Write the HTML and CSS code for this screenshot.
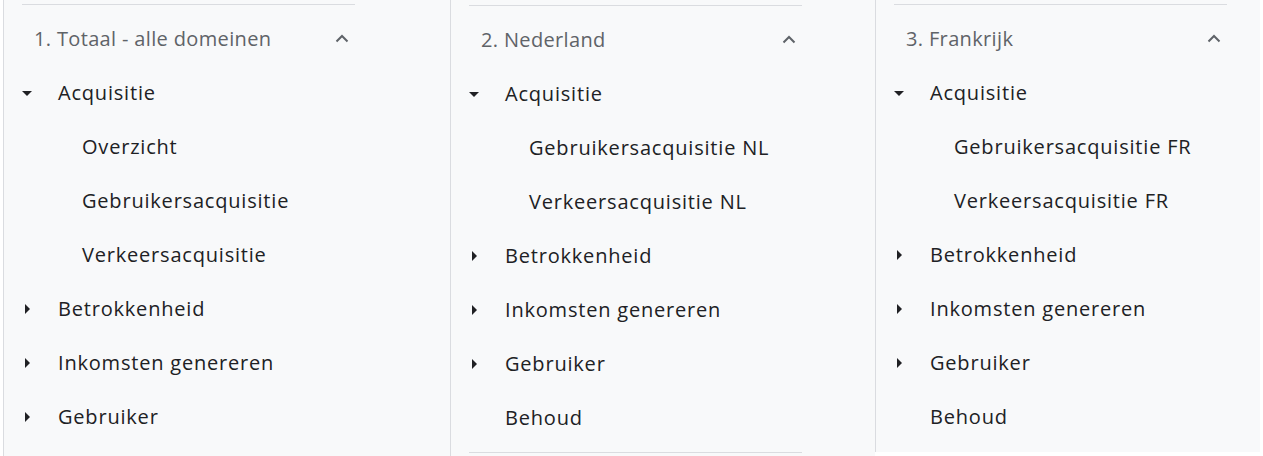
FILE: index.html
```html
<!DOCTYPE html>
<html lang="nl">
<head>
<meta charset="utf-8">
<title>Rapporten</title>
<link rel="stylesheet" href="styles.css">
</head>
<body>
<div class="panels">
  <section class="panel p1">
    <div class="rule"></div>
    <div class="group-head"><span class="group-title">1. Totaal - alle domeinen</span><svg class="chev" viewBox="0 0 14 9" width="14" height="9"><path d="M1.5 7.5 L7 2 L12.5 7.5" fill="none" stroke="#5f6368" stroke-width="2"/></svg></div>
    <ul class="tree">
      <li class="row"><span class="caret down"></span>Acquisitie</li>
      <li class="row sub">Overzicht</li>
      <li class="row sub">Gebruikersacquisitie</li>
      <li class="row sub">Verkeersacquisitie</li>
      <li class="row"><span class="caret right"></span>Betrokkenheid</li>
      <li class="row"><span class="caret right"></span>Inkomsten genereren</li>
      <li class="row"><span class="caret right"></span>Gebruiker</li>
    </ul>
  </section>
  <section class="panel p2">
    <div class="rule"></div>
    <div class="group-head"><span class="group-title">2. Nederland</span><svg class="chev" viewBox="0 0 14 9" width="14" height="9"><path d="M1.5 7.5 L7 2 L12.5 7.5" fill="none" stroke="#5f6368" stroke-width="2"/></svg></div>
    <ul class="tree">
      <li class="row"><span class="caret down"></span>Acquisitie</li>
      <li class="row sub">Gebruikersacquisitie NL</li>
      <li class="row sub">Verkeersacquisitie NL</li>
      <li class="row"><span class="caret right"></span>Betrokkenheid</li>
      <li class="row"><span class="caret right"></span>Inkomsten genereren</li>
      <li class="row"><span class="caret right"></span>Gebruiker</li>
      <li class="row"><span class="caret none"></span>Behoud</li>
    </ul>
    <div class="rule bottom"></div>
  </section>
  <section class="panel p3">
    <div class="rule"></div>
    <div class="group-head"><span class="group-title">3. Frankrijk</span><svg class="chev" viewBox="0 0 14 9" width="14" height="9"><path d="M1.5 7.5 L7 2 L12.5 7.5" fill="none" stroke="#5f6368" stroke-width="2"/></svg></div>
    <ul class="tree">
      <li class="row"><span class="caret down"></span>Acquisitie</li>
      <li class="row sub">Gebruikersacquisitie FR</li>
      <li class="row sub">Verkeersacquisitie FR</li>
      <li class="row"><span class="caret right"></span>Betrokkenheid</li>
      <li class="row"><span class="caret right"></span>Inkomsten genereren</li>
      <li class="row"><span class="caret right"></span>Gebruiker</li>
      <li class="row"><span class="caret none"></span>Behoud</li>
    </ul>
  </section>
</div>
</body>
</html>
```

FILE: styles.css
```css
* { box-sizing: border-box; }
html, body {
  margin: 0;
  padding: 0;
  background: #ffffff;
  height: 456px;
  overflow: hidden;
}
body {
  font-family: "Open Sans", "Noto Sans", sans-serif;
  color: #202124;
}
.panels {
  display: flex;
  align-items: flex-start;
  padding-left: 3px;
  height: 456px;
}
.panel {
  background: #f8f9fa;
  border-left: 1px solid #dadce0;
  height: 456px;
  padding-top: 4px;
  flex: none;
}
.p1 { width: 447px; }
.p2 { width: 425px; padding-top: 5px; }
.p3 { width: 385px; height: 452px; }
.rule {
  margin-left: 18px;
  width: 333px;
  height: 1px;
  background: #dadce0;
}
.rule.bottom { margin-top: 7px; }
.group-head {
  margin-top: 7px;
  height: 54px;
  display: flex;
  align-items: center;
  padding-left: 30px;
  width: 369px;
}
.group-title {
  font-size: 20px;
  letter-spacing: 0.35px;
  color: #5f6368;
  flex: 1;
  padding-bottom: 2px;
}
.chev {
  margin-right: 24px;
  margin-top: -1px;
}
.tree {
  list-style: none;
  margin: 0;
  padding: 0;
}
.row {
  height: 54px;
  display: flex;
  align-items: center;
  font-size: 20px;
  letter-spacing: 0.8px;
  padding-left: 15px;
  padding-bottom: 2px;
}
.row.sub { padding-left: 78px; }
.caret {
  width: 16px;
  height: 16px;
  margin-right: 23px;
  position: relative;
  flex: none;
  top: 1px;
}
.caret.down::before {
  content: "";
  position: absolute;
  left: 3px;
  top: 6px;
  border-left: 5px solid transparent;
  border-right: 5px solid transparent;
  border-top: 5px solid #202124;
}
.caret.right::before {
  content: "";
  position: absolute;
  left: 6px;
  top: 3px;
  border-top: 5px solid transparent;
  border-bottom: 5px solid transparent;
  border-left: 5px solid #202124;
}
```
